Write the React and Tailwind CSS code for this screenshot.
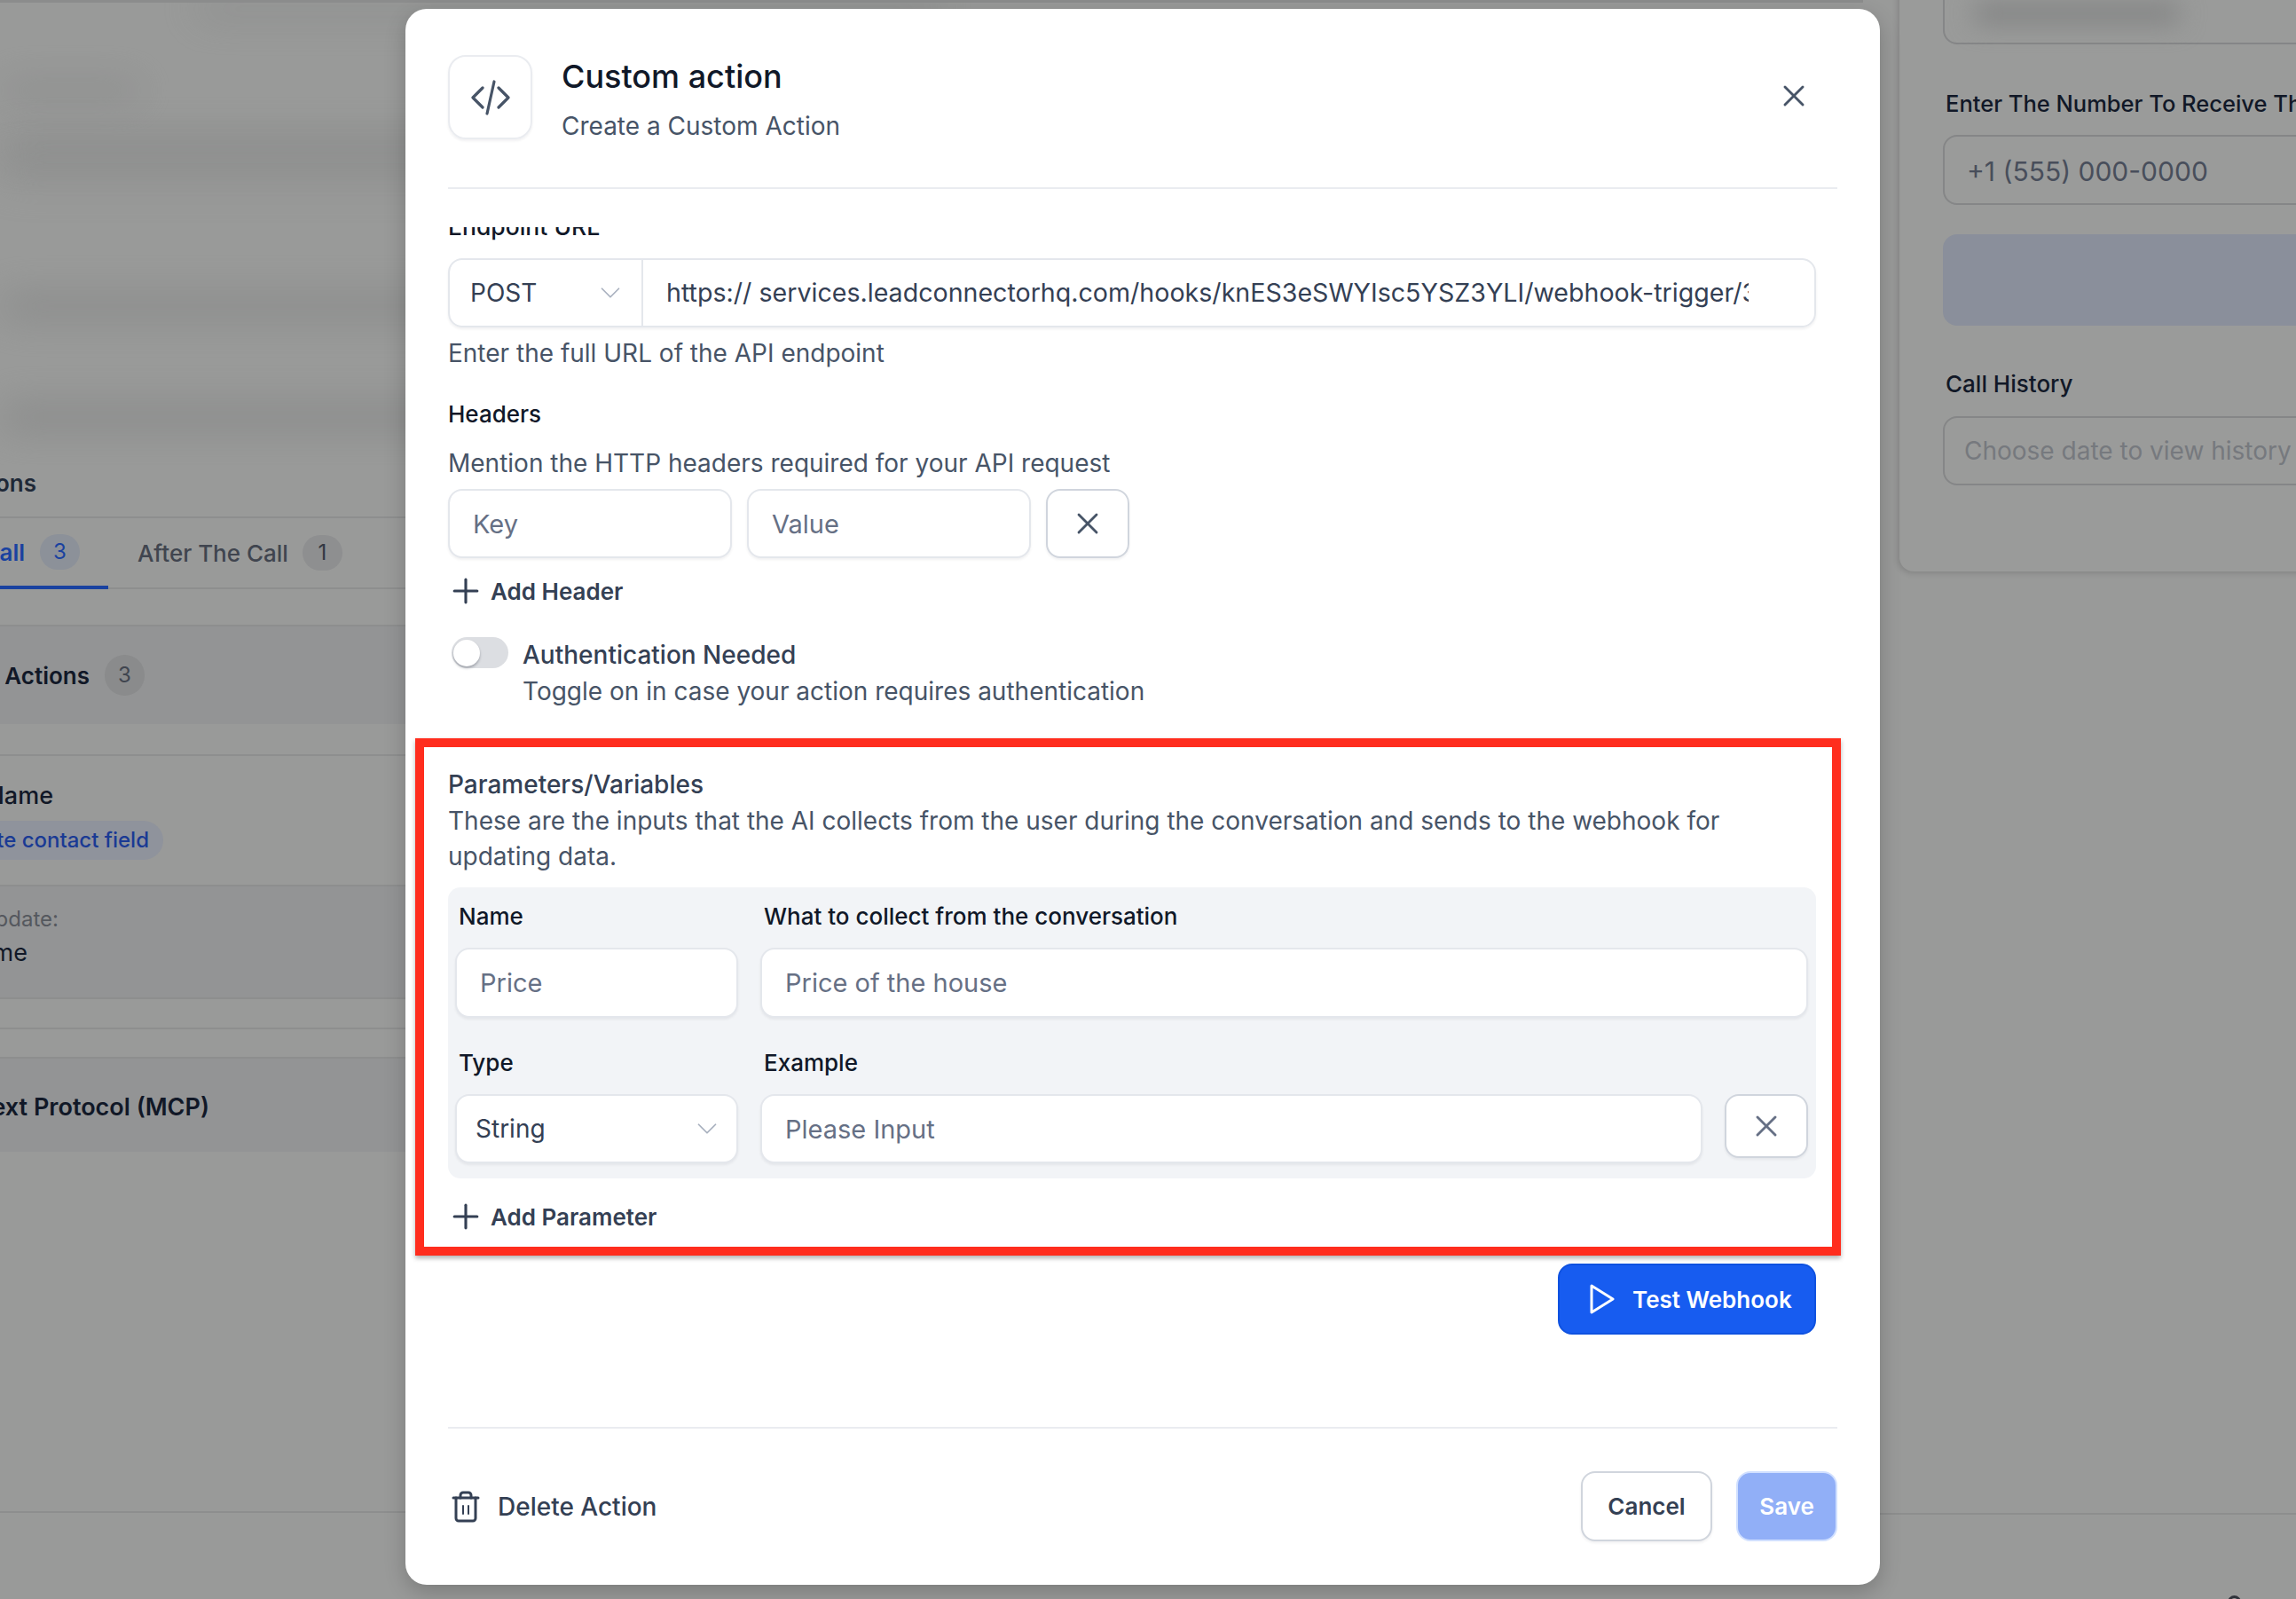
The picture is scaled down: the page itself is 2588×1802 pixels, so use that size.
// Custom action modal over a dimmed page
import { ChevronDown, Plus, X } from 'lucide-react';

const inputClass =
  'h-full w-full rounded-[16px] border-2 border-[#e4e7ec] bg-white px-[26px] text-[29px] text-[#344054] shadow-[0_2px_3px_rgba(16,24,40,0.06)] outline-none placeholder:text-[#667085]';

function Clipped({ width, className = '', children }) {
  // text that runs off the left edge of the page
  return (
    <div className={`flex justify-end whitespace-nowrap ${className}`} style={{ width }}>
      {children}
    </div>
  );
}

function Badge({ className = '', children }) {
  return (
    <span className={`flex h-[40px] w-[45px] items-center justify-center rounded-full text-[24px] ${className}`}>
      {children}
    </span>
  );
}

function BlurBar({ className }) {
  return <div className={`rounded-full bg-[#808181] blur-[22px] ${className}`} />;
}

function PageLeft() {
  return (
    <div className="flex w-[2100px] shrink-0 flex-col overflow-hidden">
      {/* blurred copy at the top of the page */}
      <div className="h-[524px] overflow-hidden border-t-[3px] border-[#8b8c8c]">
        <BlurBar className="ml-[220px] h-[14px] w-[840px] opacity-70" />
        <BlurBar className="mt-[76px] h-[18px] w-[160px] opacity-60" />
        <BlurBar className="mt-[44px] h-[20px] w-[2000px] opacity-70" />
        <BlurBar className="mt-[8px] h-[20px] w-[1800px] opacity-50" />
        <BlurBar className="mt-[130px] h-[24px] w-[2000px] opacity-70" />
        <BlurBar className="mt-[100px] h-[26px] w-[2000px] opacity-70" />
      </div>

      <Clipped width={41} className="h-[40px] items-center text-[26px] font-semibold text-[#1f2937]">
        Actions
      </Clipped>

      {/* tabs */}
      <div className="mt-[18px] flex h-[82px] border-y-2 border-[#8d8e8e]">
        <div className="-mb-[2px] flex w-[122px] items-center gap-[17px] border-b-[4px] border-[#1a42a0]">
          <Clipped width={28} className="text-[26px] font-semibold text-[#1a42a0]">
            Call
          </Clipped>
          <Badge className="bg-[#8c9199] text-[#1a42a0]">3</Badge>
        </div>
        <div className="ml-[33px] flex items-center gap-[16px]">
          <span className="text-[26px] font-medium whitespace-nowrap text-[#40454f]">After The Call</span>
          <Badge className="bg-[#8e8f90] text-[#333842]">1</Badge>
        </div>
      </div>

      <div className="mt-[40px] flex h-[112px] items-center border-t-2 border-[#8d8e8e] bg-[#939495]">
        <Clipped width={101} className="text-[26px] font-semibold text-[#111827]">
          Custom Actions
        </Clipped>
        <Badge className="ml-[17px] h-[46px] bg-[#8a8b8c] text-[#40454f]">3</Badge>
      </div>

      <div className="mt-[34px] h-[147px] border-t-2 border-[#8d8e8e] pt-[25px]">
        <Clipped width={60} className="text-[27px] leading-[40px] font-medium text-[#111827]">
          Name
        </Clipped>
        <div className="mt-[8px] flex h-[44px] w-[184px] items-center rounded-r-full bg-[#8f939c]">
          <Clipped width={168} className="text-[24px] font-medium text-[#1a3a94]">
            Update contact field
          </Clipped>
        </div>
      </div>

      <div className="h-[127px] border-t-2 border-[#8d8e8e] bg-[#939495] pt-[19px]">
        <Clipped width={66} className="text-[24px] leading-[36px] text-[#55585e]">
          Field to update:
        </Clipped>
        <Clipped width={31} className="text-[27px] leading-[40px] text-[#111827]">
          Name
        </Clipped>
      </div>

      <div className="h-[34px] border-t-2 border-[#8d8e8e]" />
      <div className="h-[33px] border-t-2 border-[#8d8e8e]" />

      <div className="flex h-[107px] items-center border-t-2 border-[#8d8e8e] bg-[#939495] pt-[6px]">
        <Clipped width={236} className="text-[27px] font-semibold text-[#111827]">
          Model Context Protocol (MCP)
        </Clipped>
      </div>

      <div className="mt-[405px] border-t-2 border-[#8d8e8e]" />
    </div>
  );
}

function PageRight() {
  return (
    <div className="flex min-w-0 flex-1 flex-col">
      <div className="-mt-[30px] ml-[41px] flex h-[674px] w-[600px] shrink-0 flex-col rounded-bl-[16px] bg-[#9a9b9a] pl-[49px] shadow-[-2px_2px_6px_rgba(0,0,0,0.14)]">
        <div className="flex h-[80px] shrink-0 items-center rounded-[16px] border-2 border-[#858687] pl-[34px]">
          <div className="mt-[10px] h-[24px] w-[230px] rounded bg-[#838484] blur-[14px]" />
        </div>
        <div className="mt-[47px] pl-[3px] text-[25.5px] leading-[40px] font-medium whitespace-nowrap text-[#111827]">
          Enter The Number To Receive The Call
        </div>
        <div className="mt-[15px] flex h-[79px] shrink-0 items-center rounded-[16px] border-2 border-[#858687] pt-[3px] pl-[25px] text-[30px] text-[#484e5b]">
          +1 (555) 000-0000
        </div>
        <div className="mt-[33px] h-[103px] shrink-0 rounded-[16px] bg-[#8a8f9b]" />
        <div className="mt-[46px] pl-[3px] text-[26px] leading-[40px] font-medium text-[#111827]">Call History</div>
        <div className="mt-[16px] flex h-[78px] shrink-0 items-center rounded-[16px] border-2 border-[#858687] pl-[22px] text-[28px] whitespace-nowrap text-[#76797e]">
          Choose date to view history
        </div>
      </div>
      <div className="mt-[1061px] shrink-0 border-t-2 border-[#8d8e8e]" />
      <div className="mt-[91px] ml-[411px] h-[20px] w-[15px] shrink-0 rounded-full border-[3px] border-[#30343c]" />
    </div>
  );
}

function AddRow({ label }) {
  return (
    <button className="flex h-[44px] items-center text-[26px] font-semibold text-[#344054]">
      <Plus size={44} strokeWidth={1.7} className="-ml-[2px] shrink-0" />
      <span className="ml-[6px]">{label}</span>
    </button>
  );
}

function ParamLabel({ className = '', children }) {
  return <div className={`ml-[4px] text-[26px] leading-[40px] font-medium text-[#101828] ${className}`}>{children}</div>;
}

function SelectBox({ value, className = '' }) {
  return (
    <div className={`flex items-center justify-between text-[28px] text-[#344054] ${className}`}>
      {value}
      <ChevronDown size={38} strokeWidth={1.1} className="text-[#a9b1bf]" />
    </div>
  );
}

function ActionModal() {
  return (
    <div className="absolute top-[10px] left-[457px] flex h-[1776px] w-[1662px] flex-col rounded-[24px] bg-white font-[Inter,sans-serif] shadow-[0_8px_24px_rgba(0,0,0,0.2)]">
      {/* header */}
      <div className="mx-[48px] flex justify-between border-b-2 border-[#eaecf0] pt-[52px] pb-[54px]">
        <div className="flex gap-[33px]">
          <div className="flex h-[95px] w-[95px] items-center justify-center rounded-[20px] border-2 border-[#eaecf0] shadow-[0_2px_3px_rgba(16,24,40,0.06)]">
            <svg width="44" height="40" viewBox="0 0 44 40" fill="none" stroke="#475467" strokeWidth="3.2" strokeLinecap="round" strokeLinejoin="round">
              <path d="M13 9 L2 20 L13 31" />
              <path d="M31 9 L42 20 L31 31" />
              <path d="M26 2 L18 38" />
            </svg>
          </div>
          <div className="h-[95px]">
            <div className="mt-[2px] text-[36px] leading-[44px] font-medium text-[#101828]">Custom action</div>
            <div className="mt-[14px] text-[28px] leading-[40px] text-[#475467]">Create a Custom Action</div>
          </div>
        </div>
        <X size={40} strokeWidth={1.7} className="mt-[26px] mr-[29px] text-[#475467]" />
      </div>

      {/* scrolled form body */}
      <div className="mt-[43px] min-h-0 flex-1 overflow-hidden pl-[48px]">
        <div className="w-[1542px]">
          <div className="-mt-[21px] text-[26.5px] leading-[40px] font-medium text-[#101828]">Endpoint URL</div>
          <div className="mt-[16px] flex h-[78px] rounded-[16px] border-2 border-[#e4e7ec] shadow-[0_2px_3px_rgba(16,24,40,0.06)]">
            <SelectBox value="POST" className="w-[218px] border-r-2 border-[#e4e7ec] pr-[16px] pl-[23px]" />
            <input
              readOnly
              defaultValue="https:// services.leadconnectorhq.com/hooks/knES3eSWYIsc5YSZ3YLI/webhook-trigger/3f8a9c21-7d4e"
              className="min-w-0 flex-1 bg-transparent pr-[74px] pl-[26px] text-[28.6px] text-[#344054] outline-none"
            />
          </div>
          <div className="mt-[9px] text-[28px] leading-[40px] text-[#475467]">Enter the full URL of the API endpoint</div>

          <div className="mt-[29px] text-[26px] leading-[40px] font-medium text-[#101828]">Headers</div>
          <div className="mt-[15px] text-[28px] leading-[40px] text-[#475467]">Mention the HTTP headers required for your API request</div>
          <div className="mt-[9px] flex h-[78px] gap-[17px]">
            <div className="w-[320px]">
              <input placeholder="Key" className={inputClass} />
            </div>
            <div className="w-[320px]">
              <input placeholder="Value" className={inputClass} />
            </div>
            <button className="flex w-[94px] items-center justify-center rounded-[16px] border-2 border-[#d0d5dd] bg-white text-[#475467] shadow-[0_2px_3px_rgba(16,24,40,0.06)]">
              <X size={40} strokeWidth={1.7} />
            </button>
          </div>
          <div className="mt-[15px]">
            <AddRow label="Add Header" />
          </div>

          {/* auth toggle */}
          <div className="mt-[30px] ml-[4px] flex gap-[16px]">
            <div className="flex h-[35px] w-[64px] shrink-0 items-center rounded-full bg-[#dcdee2] pl-[2px]">
              <div className="h-[30px] w-[30px] rounded-full bg-white shadow-[0_2px_3px_rgba(16,24,40,0.3)]" />
            </div>
            <div>
              <div className="text-[28px] leading-[40px] font-medium text-[#344054]">Authentication Needed</div>
              <div className="mt-[1px] text-[28px] leading-[40px] text-[#475467]">Toggle on in case your action requires authentication</div>
            </div>
          </div>

          {/* parameters */}
          <div className="mt-[65px] text-[28px] leading-[40px] font-medium text-[#344054]">Parameters/Variables</div>
          <div className="mt-[1px] text-[28px] leading-[40px] text-[#475467]">
            These are the inputs that the AI collects from the user during the conversation and sends to the webhook for updating data.
          </div>
          <div className="mt-[15px] rounded-[14px] bg-[#f2f4f7] pt-[13px] pr-[9px] pb-[17px] pl-[8px]">
            <div className="grid grid-cols-[319px_1fr] gap-x-[25px]">
              <ParamLabel>Name</ParamLabel>
              <ParamLabel>What to collect from the conversation</ParamLabel>
              <div className="mt-[15px] h-[79px]">
                <input placeholder="Price" className={inputClass} />
              </div>
              <div className="mt-[15px] h-[79px]">
                <input placeholder="Price of the house" className={inputClass} />
              </div>
              <ParamLabel className="mt-[31px]">Type</ParamLabel>
              <ParamLabel className="mt-[31px]">Example</ParamLabel>
              <div className="mt-[15px] h-[78px] rounded-[16px] border-2 border-[#e4e7ec] bg-white shadow-[0_2px_3px_rgba(16,24,40,0.06)]">
                <SelectBox value="String" className="h-full pr-[14px] pl-[21px]" />
              </div>
              <div className="mt-[15px] flex h-[78px] gap-[25px]">
                <input placeholder="Please Input" className={inputClass} />
                <button className="flex h-[72px] w-[94px] shrink-0 items-center justify-center rounded-[16px] border-2 border-[#d0d5dd] bg-white text-[#667085] shadow-[0_2px_3px_rgba(16,24,40,0.06)]">
                  <X size={40} strokeWidth={1.7} />
                </button>
              </div>
            </div>
          </div>
          <div className="mt-[21px]">
            <AddRow label="Add Parameter" />
          </div>

          <div className="mt-[31px] flex justify-end">
            <button className="flex h-[80px] w-[291px] items-center gap-[19px] rounded-[16px] border-2 border-[#0f52e0] bg-[#175cf0] pl-[33px] text-[26px] font-semibold text-white">
              <svg width="30" height="34" viewBox="0 0 30 34" fill="none" stroke="currentColor" strokeWidth="3" strokeLinejoin="round">
                <path d="M3 2 L27 17 L3 32 Z" />
              </svg>
              Test Webhook
            </button>
          </div>
        </div>
      </div>

      {/* footer */}
      <div className="mx-[48px] flex items-center justify-between border-t-2 border-[#eaecf0] pt-[48px] pb-[49px]">
        <button className="ml-[4px] flex items-center gap-[20px] text-[28px] font-medium text-[#344054]">
          <svg width="32" height="36" viewBox="0 0 32 36" fill="none" stroke="currentColor" strokeWidth="3" strokeLinecap="round" strokeLinejoin="round">
            <path d="M2 8 H30" />
            <path d="M10 8 V5 a3 3 0 0 1 3-3 h6 a3 3 0 0 1 3 3 V8" />
            <path d="M5 8 V31 a3 3 0 0 0 3 3 h16 a3 3 0 0 0 3-3 V8" />
            <path d="M13 17 V26" strokeWidth="2" />
            <path d="M19 17 V26" strokeWidth="2" />
          </svg>
          Delete Action
        </button>
        <div className="flex gap-[27px]">
          <button className="h-[79px] w-[148px] rounded-[16px] border-2 border-[#d0d5dd] bg-white text-[26px] font-semibold text-[#344054] shadow-[0_2px_3px_rgba(16,24,40,0.06)]">
            Cancel
          </button>
          <button className="h-[79px] w-[114px] rounded-[16px] border-2 border-[#d1e0ff] bg-[#91aff7] text-[26px] font-semibold text-white">
            Save
          </button>
        </div>
      </div>

      {/* red annotation round the parameters block */}
      <div className="absolute top-[822px] left-[11px] h-[583px] w-[1607px] border-[10px] border-[#ff2d1e] shadow-[0_3px_5px_rgba(0,0,0,0.3)]" />
    </div>
  );
}

export default function App() {
  return (
    <div className="relative flex h-[1802px] w-[2588px] overflow-hidden bg-[#999a99] font-[Inter,sans-serif]">
      <PageLeft />
      <PageRight />
      <ActionModal />
    </div>
  );
}
